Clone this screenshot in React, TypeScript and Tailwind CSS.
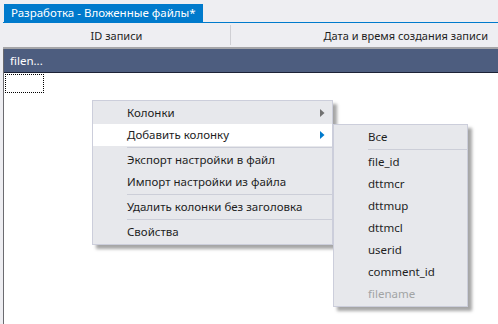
import { ReactNode } from 'react'

type MenuItem =
  | { kind: 'item'; label: string; arrow?: boolean; active?: boolean; disabled?: boolean }
  | { kind: 'sep' }

const mainMenu: MenuItem[] = [
  { kind: 'item', label: 'Колонки', arrow: true },
  { kind: 'item', label: 'Добавить колонку', arrow: true, active: true },
  { kind: 'sep' },
  { kind: 'item', label: 'Экспорт настройки в файл' },
  { kind: 'item', label: 'Импорт настройки из файла' },
  { kind: 'sep' },
  { kind: 'item', label: 'Удалить колонки без заголовка' },
  { kind: 'sep' },
  { kind: 'item', label: 'Свойства' },
]

const subMenu: MenuItem[] = [
  { kind: 'item', label: 'Все' },
  { kind: 'sep' },
  { kind: 'item', label: 'file_id' },
  { kind: 'item', label: 'dttmcr' },
  { kind: 'item', label: 'dttmup' },
  { kind: 'item', label: 'dttmcl' },
  { kind: 'item', label: 'userid' },
  { kind: 'item', label: 'comment_id' },
  { kind: 'item', label: 'filename', disabled: true },
]

const Arrow = ({ active }: { active?: boolean }) => (
  <svg width="5" height="8" viewBox="0 0 5 8" className="mr-[7px]">
    <path d="M0 0 L4.5 4 L0 8 Z" fill={active ? '#007acc' : '#717171'} />
  </svg>
)

const Menu = ({ items, className }: { items: MenuItem[]; className: string }): ReactNode => (
  <div
    className={`absolute flex flex-col py-px bg-[#e7e8ec] border border-[#cccedb] shadow-[4px_4px_3px_rgba(0,0,0,0.35)] ${className}`}
  >
    {items.map((item, i) =>
      item.kind === 'sep' ? (
        <div key={i} className="h-[3px] flex items-center pl-[34px]">
          <div className="w-full h-px bg-[#ccced8]" />
        </div>
      ) : (
        <div
          key={i}
          className={`h-[22px] flex items-center justify-between pl-[34px] ${item.active ? 'bg-white' : ''} ${
            item.disabled ? 'text-[#a2a4a5]' : 'text-[#1e1e1e]'
          }`}
        >
          <span>{item.label}</span>
          {item.arrow && <Arrow active={item.active} />}
        </div>
      )
    )}
  </div>
)

export default function App() {
  return (
    <div
      className="relative w-[498px] h-[324px] overflow-hidden bg-[#eeeef2] text-[11.5px] leading-none"
      style={{ fontFamily: '"Noto Sans", "Open Sans", sans-serif' }}
    >
      <div className="ml-[3px] flex flex-col h-full">
        <div className="h-[23px] flex items-end border-b border-[#007acc]">
          <div className="ml-px h-[18px] px-[7px] flex items-center bg-[#007acc] text-white">
            Разработка - Вложенные файлы*
          </div>
        </div>

        <div className="h-[26px] flex items-center text-[11px] text-[#1e1e1e] border-b-2 border-[#a5a5a8]">
          <div className="w-[228px] h-[20px] flex items-center justify-center border-r border-[#cfcfd4]">
            ID записи
          </div>
          <div className="flex-1 flex items-center justify-end pr-[10px]">Дата и время создания записи</div>
        </div>

        <div className="flex-1 flex flex-col bg-white border-l border-[#6b6b70]">
          <div className="h-[24px] flex items-center px-[6px] bg-[#4d5d7f] text-white border-b border-[#1c2236]">
            filen...
          </div>
          <div className="ml-px mt-px w-[39px] h-[19px] border border-dotted border-black" />
        </div>
      </div>

      <Menu items={mainMenu} className="left-[92px] top-[100px] w-[241px]" />
      <Menu items={subMenu} className="left-[333px] top-[124px] w-[135px]" />
    </div>
  )
}
